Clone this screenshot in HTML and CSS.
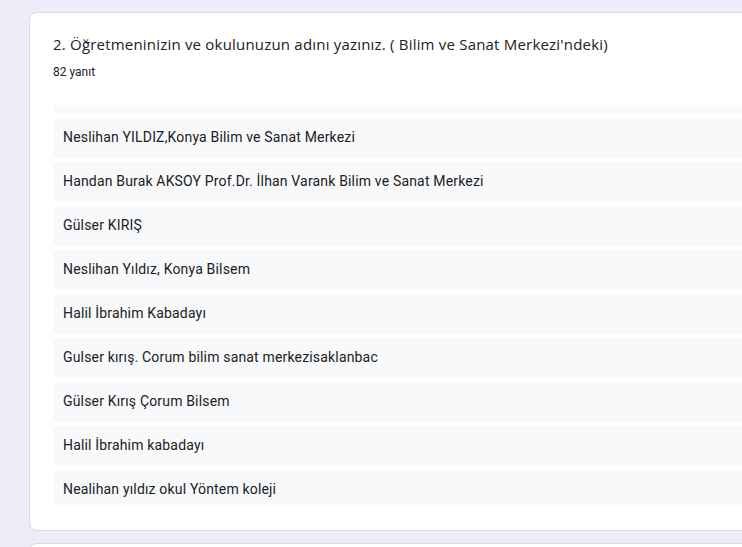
FILE: index.html
```html
<!DOCTYPE html>
<html>
<head>
<meta charset="utf-8">
<title>Yanıtlar</title>
<link rel="stylesheet" href="styles.css">
</head>
<body>
<div class="card">
	<div class="qTitle">2. Öğretmeninizin ve okulunuzun adını yazınız. ( Bilim ve Sanat Merkezi'ndeki)</div>
	<div class="qCount">82 yanıt</div>
	<div class="answers">
		<div class="answerList">
			<div class="answer">Neslihan Yıldız Konya Bilsem</div>
			<div class="answer">Neslihan YILDIZ,Konya Bilim ve Sanat Merkezi</div>
			<div class="answer">Handan Burak AKSOY Prof.Dr. İlhan Varank Bilim ve Sanat Merkezi</div>
			<div class="answer">Gülser KIRIŞ</div>
			<div class="answer">Neslihan Yıldız, Konya Bilsem</div>
			<div class="answer">Halil İbrahim Kabadayı</div>
			<div class="answer">Gulser kırış. Corum bilim sanat merkezisaklanbac</div>
			<div class="answer">Gülser Kırış Çorum Bilsem</div>
			<div class="answer">Halil İbrahim kabadayı</div>
			<div class="answer">Nealihan yıldız okul Yöntem koleji</div>
			<div class="answer">Gülser Kırış</div>
		</div>
	</div>
</div>
<div class="card"></div>
</body>
</html>
```

FILE: styles.css
```css
html, body {
	margin:0;
	padding:0;
	background-color:#f0ebf8;
	overflow:hidden;
	height:547px;
}

body {
	padding:12px 0 0 29px;
	box-sizing:border-box;
	font-family:Roboto, Arial, sans-serif;
	color:#202124;
}

.card {
	width:800px;
	background-color:#fff;
	border:1px solid #dadce0;
	border-radius:8px;
	padding:19px 23px 25px 23px;
	margin-bottom:12px;
	box-sizing:border-box;
}

.qTitle {
	font-family:"Open Sans", Arial, sans-serif;
	font-size:15px;
	line-height:24px;
	letter-spacing:0.2px;
	color:#202124;
}

.qCount {
	font-size:12px;
	line-height:16px;
	margin-top:8px;
}

.answers {
	margin-top:25px;
	height:400px;
	overflow:hidden;
}

.answerList {
	margin-top:-31px;
	display:flex;
	flex-direction:column;
	gap:4px;
}

.answer {
	background-color:#f8f9fa;
	border-radius:4px;
	height:40px;
	line-height:39px;
	padding-left:10px;
	font-size:14px;
	letter-spacing:0.17px;
	white-space:nowrap;
}
```
